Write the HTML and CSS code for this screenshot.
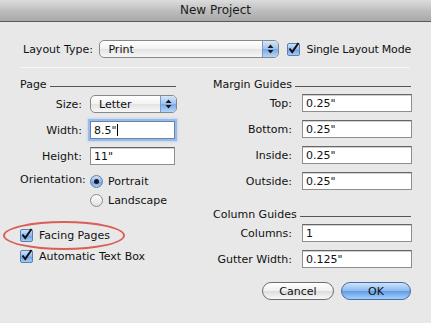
FILE: index.html
```html
<!DOCTYPE html>
<html>
<head>
<meta charset="utf-8">
<link rel="stylesheet" href="styles.css">
</head>
<body>
<div class="dialog">
  <div class="titlebar">New Project</div>
  <div class="content">
    <div class="toprow">
      <span class="lbl">Layout Type:</span>
      <div class="popup wide"><span class="pv">Print</span><span class="arrows"><svg width="7" height="10" viewBox="0 0 7 10"><path d="M3.5 0.5 L6.5 4 L0.5 4 Z M0.5 6 L6.5 6 L3.5 9.5 Z" fill="#1a1a1a"/></svg></span></div>
      <label class="check"><span class="cb"><svg width="13" height="13" viewBox="0 0 13 13"><path d="M2.5 6.5 L5.2 10 L11.5 1" stroke="#111" stroke-width="2" fill="none"/></svg></span>Single Layout Mode</label>
    </div>
    <div class="sep"></div>
    <div class="cols">
      <div class="left">
        <div class="ghead"><span>Page</span><i></i></div>
        <div class="form lform">
          <span class="rl">Size:</span>
          <div class="popup small"><span class="pv">Letter</span><span class="arrows"><svg width="7" height="10" viewBox="0 0 7 10"><path d="M3.5 0.5 L6.5 4 L0.5 4 Z M0.5 6 L6.5 6 L3.5 9.5 Z" fill="#1a1a1a"/></svg></span></div>
          <span class="rl">Width:</span>
          <div class="field focus">8.5"<span class="caret"></span></div>
          <span class="rl">Height:</span>
          <div class="field">11"</div>
          <span class="rl top">Orientation:</span>
          <div class="radios">
            <div class="radio"><span class="rb on"></span>Portrait</div>
            <div class="radio"><span class="rb"></span>Landscape</div>
          </div>
        </div>
        <div class="checks">
          <label class="check"><span class="cb"><svg width="13" height="13" viewBox="0 0 13 13"><path d="M2.5 6.5 L5.2 10 L11.5 1" stroke="#111" stroke-width="2" fill="none"/></svg></span>Facing Pages</label>
          <label class="check"><span class="cb"><svg width="13" height="13" viewBox="0 0 13 13"><path d="M2.5 6.5 L5.2 10 L11.5 1" stroke="#111" stroke-width="2" fill="none"/></svg></span>Automatic Text Box</label>
          <span class="ring"></span>
        </div>
      </div>
      <div class="right">
        <div class="ghead"><span>Margin Guides</span><i></i></div>
        <div class="form rform">
          <span class="rl">Top:</span><div class="field">0.25"</div>
          <span class="rl">Bottom:</span><div class="field">0.25"</div>
          <span class="rl">Inside:</span><div class="field">0.25"</div>
          <span class="rl">Outside:</span><div class="field">0.25"</div>
        </div>
        <div class="ghead g2"><span>Column Guides</span><i></i></div>
        <div class="form rform">
          <span class="rl">Columns:</span><div class="field">1</div>
          <span class="rl">Gutter Width:</span><div class="field">0.125"</div>
        </div>
        <div class="buttons">
          <button class="btn">Cancel</button>
          <button class="btn ok">OK</button>
        </div>
      </div>
    </div>
  </div>
</div>
</body>
</html>
```
FILE: styles.css
```css
* { box-sizing: border-box; }
html, body { margin: 0; padding: 0; }
body {
  width: 431px; height: 323px; overflow: hidden;
  background: #e8e8e8;
  font-family: "DejaVu Sans", "Liberation Sans", sans-serif;
  font-size: 11px; color: #111;
}
.dialog { width: 431px; height: 323px; background: #e8e8e8; }
.titlebar {
  height: 22px; line-height: 21px; text-align: center;
  font-size: 12px; color: #1a1a1a;
  background: linear-gradient(#dcdcdc, #b9b9b9 60%, #a9a9a9);
  border-bottom: 1px solid #5a5a5a;
}
.content { padding: 18px 20px 0 20px; }
.toprow { display: flex; align-items: center; height: 18px; padding-left: 3px; white-space: nowrap; }
.toprow .lbl { width: 77px; }
.popup {
  height: 18px; border: 1px solid #888; border-radius: 5px;
  background: linear-gradient(#ffffff, #f2f2f2 50%, #e3e3e3 51%, #f7f7f7);
  display: flex; align-items: center; overflow: hidden;
}
.popup .pv { flex: 1; padding-left: 8px; }
.popup .arrows {
  width: 16px; height: 100%; display: flex; align-items: center; justify-content: center;
  background: linear-gradient(#d6e6fb, #9cc2f0 50%, #78a9e8 51%, #b6d4f8);
  border-left: 1px solid #7a99c4;
}
.popup.wide { width: 180px; flex: none; }
.popup.small { width: 87px; }
.check { display: flex; align-items: center; gap: 6px; white-space: nowrap; }
.toprow .check { margin-left: 8px; letter-spacing: -0.2px; }
.cb {
  flex: none;
  width: 13px; height: 13px; border: 1px solid #5b7fae; border-radius: 2px;
  background: linear-gradient(#cfe2fb, #8fb8ee 50%, #6d9fe4 51%, #a9cbf6);
  display: inline-flex; position: relative;
}
.cb svg { position: absolute; left: -1px; top: -2px; }
.sep { height: 1px; background: #9a9a9a; margin: 9px 1px 0 0; border-bottom: 1px solid #f6f6f6; }
.cols { display: flex; margin-top: 8px; }
.left { width: 193px; position: relative; }
.right { width: 198px; }
.ghead { display: flex; align-items: flex-end; height: 15px; }
.ghead i { flex: 1; height: 1px; background: #555; margin: 0 0 4px 3px; }
.left .ghead { width: 156px; }
.form { display: grid; align-items: center; }
.lform { grid-template-columns: 62px 1fr; column-gap: 8px; row-gap: 8px; margin-top: 4px; }
.rform { grid-template-columns: 79px 110px; column-gap: 10px; row-gap: 8px; margin-top: 3px; }
.rl { text-align: right; }
.rl.top { align-self: start; line-height: 13px; }
.field {
  height: 18px; background: #fff; border: 1px solid #8e8e8e; border-top-color: #666;
  box-shadow: inset 0 1px 0 #d0d0d0; padding: 2px 0 0 3px; line-height: 13px;
}
.lform .field { width: 85px; }
.field.focus { border-color: #6583b4; box-shadow: 0 0 0 2px #9dbbe2, 0 0 2px 3px #c5d8f0; }
.caret { display: inline-block; width: 1px; height: 12px; background: #000; vertical-align: -2px; }
.radios { display: flex; flex-direction: column; gap: 6px; margin-top: 2px; }
.radio { display: flex; align-items: center; gap: 5px; line-height: 13px; }
.rb { width: 13px; height: 13px; border-radius: 50%; border: 1px solid #8a8a8a;
  background: linear-gradient(#fcfcfc, #e0e0e0); position: relative; }
.rb.on { border-color: #5b7fae; background: linear-gradient(#cfe2fb, #8fb8ee 50%, #6d9fe4 51%, #a9cbf6); }
.rb.on::after { content: ""; position: absolute; left: 3px; top: 3px; width: 5px; height: 5px; border-radius: 50%; background: #1a1a1a; }
.checks { margin-top: 22px; display: flex; flex-direction: column; gap: 8px; position: relative; }
.ring { position: absolute; left: -17px; top: -8px; width: 122px; height: 29px;
  border: 2px solid rgba(214, 72, 60, 0.85); border-radius: 50%; }
.g2 { margin-top: 16px; }
.buttons { display: flex; justify-content: flex-end; gap: 7px; margin-top: 14px; padding-right: 0; }
.btn {
  font: inherit; font-size: 11px; color: #111; height: 18px; border-radius: 9px;
  border: 1px solid #6e6e6e; width: 72px; padding: 0;
  background: linear-gradient(#ffffff, #f0f0f0 50%, #dcdcdc 51%, #f8f8f8);
}
.btn.ok { width: 70px; border-color: #3f6ea8;
  background: linear-gradient(#cfe3fb, #8ab8f0 50%, #5f9be6 51%, #a6d0fa); }
```
